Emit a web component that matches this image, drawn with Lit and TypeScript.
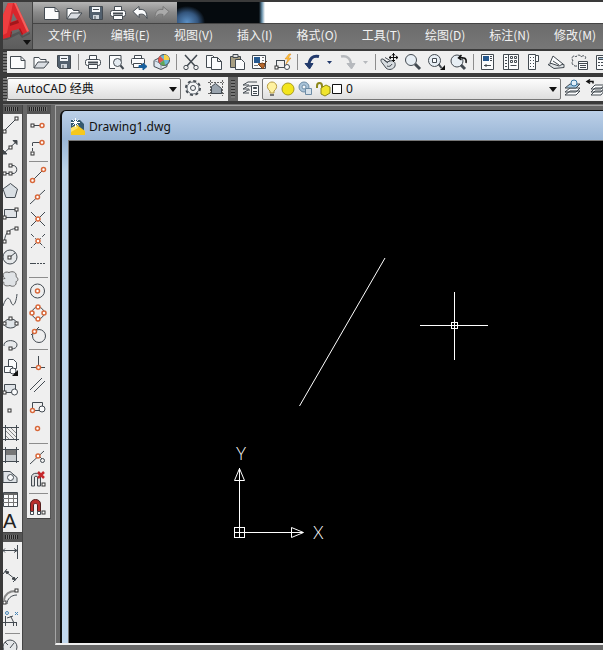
import { LitElement, html, svg, css, SVGTemplateResult } from "lit";
import { customElement, property } from "lit/decorators.js";

const node = (x: number, y: number) =>
  svg`<rect class="node" x=${x - 1.5} y=${y - 1.5} width="3" height="3"></rect>`;
const snap = (x: number, y: number) => svg`<circle class="snap" cx=${x} cy=${y} r="2"></circle>`;

/* Toolbar glyphs, 22 x 22 */
const glyphs: Record<string, SVGTemplateResult> = {
  new: svg`<path class="p" d="M3.5 5.5h10.500l4 4v8h-14.500z"/><path d="M14 5.500v4h4"/>`,
  open: svg`<path class="p" d="M4 17V6.500h5l1.500 2h5.500V11"/><path fill="#d9dde2" d="M4 17l4-6h11l-5 6z"/>`,
  save: svg`<path fill="#52606e" d="M4.500 4.500h13v13h-11l-2-2z"/><path fill="#f4f7fa" stroke="none" d="M7 5h8v5H7z"/><path fill="#cfd6dd" stroke="none" d="M8 13h6v4H8z"/><path d="M10 14v3M8 7.500h6"/>`,
  print: svg`<path class="p" d="M7.500 9V4.500h7V9"/><rect class="p" x="3.500" y="8.500" width="15" height="6" rx="2"/><path class="p" d="M6.500 13.500h9v4h-9z"/><path stroke-width="2" d="M6 11.500h10"/>`,
  preview: svg`<path class="p" d="M16 10V4.500H4.500v13H10"/><circle fill="#e4ebf1" cx="12.500" cy="11.500" r="4"/><path stroke-width="2" d="M15.500 14.500l3 3.500"/>`,
  publish: svg`<path class="p" d="M6.500 8V4.500h7V8"/><rect class="p" x="3.500" y="7.500" width="13" height="6" rx="1"/><path class="p" d="M5.500 12.500h8v4h-8z"/><path fill="#17609e" stroke="#17609e" d="M11 14.500h4V12l4 3.500-4 3.500v-2.500h-4z"/>`,
  web: svg`<path fill="#dce5ee" d="M3 9.500l6-3 7 3v6l-6 3-7-3z"/><path stroke="#8a98a5" d="M3 9.500l7 3v6"/><circle cx="13" cy="9" r="5.500" fill="#6cb9d8"/><path stroke="none" fill="#f6d248" d="M13 9V3.500a5.500 5.500 0 0 1 5.500 5.500z"/><path stroke="none" fill="#e2574c" d="M13 9L8.500 12.200A5.500 5.500 0 0 1 9 5z"/><path stroke="none" fill="#62a654" d="M13 9l1 5.500a5.500 5.500 0 0 1-5-2z"/>`,
  cut: svg`<path stroke-width="1.500" d="M5 4l10 11M17 4L7 15"/><circle cx="6" cy="16.500" r="2.200"/><circle cx="16" cy="16.500" r="2.200"/>`,
  copy: svg`<path class="p" d="M3.500 4.500h6l3 3v9h-9z"/><path class="p" d="M8.500 6.500h6l4 4v8h-10zM14.500 6.500v4h4"/>`,
  paste: svg`<path fill="#a79e82" d="M4.500 5.500h10v11h-10z"/><path fill="#ddd" d="M7 6.500v-3h5v3z"/><path class="p" d="M9.500 8.500h6l3 3v7h-9z"/>`,
  match: svg`<path class="p" d="M3.500 4.500h13v13h-13z"/><path stroke="none" fill="#25588f" d="M5 6h6v6H5z"/><path stroke="#777" d="M13 6.500h2M13 9.500h2M5 14.500h4"/><path fill="#b5662b" stroke="#714019" d="M9 13l5 5 2-4-2-2zM15 13l3-3"/>`,
  edit: svg`<path d="M4 9.500h9M4.500 9.500v7M4 16.500h9M12.500 16V9"/>${node(4.500, 16.500)}<circle cx="15" cy="16" r="2.500" class="p"/><path stroke="#d98315" fill="#ffc43d" stroke-width="0.500" d="M17 3l-4 5h3l-2 5 5-6h-3l3-4z"/>`,
  undo: svg`<path stroke="#223a6c" stroke-width="3" d="M18 5.500c-6-1.500-10 2-10 9"/><path fill="#223a6c" stroke="#223a6c" d="M4 12.500h8l-3.500 5.500z"/>`,
  redo: svg`<path stroke="#b6b9bd" stroke-width="2.500" d="M4 5.500c6-1.500 10 2 10 9"/><path fill="#b6b9bd" stroke="#b6b9bd" d="M10 12.500h8l-3.500 5.500z"/>`,
  pan: svg`<path fill="#d7dce0" d="M3 8c-2 0-1 3 1 5l3 4c3 3 8 1 9-2 1-4-2-6-5-5l-3 1-4-3z"/><path d="M5 9l4 3M6 6.500l5 3M8 15c2 1 4 0 5-2"/><path stroke="#111" d="M14.500 2v9M10 6.500h9M13 4.500l1.500-2 1.500 2M13 9l1.500 1.500L16 9M12 5l-2 1.500L12 8M17 5l2 1.500L17 8"/>`,
  zoom: svg`<circle fill="#e7eef4" cx="9" cy="9" r="5.500"/><path stroke-width="3" d="M13 13l5 5"/>`,
  zoomwin: svg`<circle fill="#e7eef4" cx="9.500" cy="9.500" r="6"/><path class="p" d="M7.500 7.500h4v4h-4z"/><path stroke-width="2" d="M13.500 13l3 4"/><path stroke="none" fill="#111" d="M20 14v5h-5z"/>`,
  zoomprev: svg`<circle fill="#e7eef4" cx="9" cy="10" r="6"/><path stroke-width="3" d="M13 14l4 4"/><path stroke="#111" stroke-width="1.500" d="M18 12c1-5-2-6-7-5M13.500 4L10.500 7l3 2"/>`,
  props: svg`<path class="p" d="M4.500 3.500h12v15h-12z"/><path stroke="none" fill="#25588f" d="M6 5h6v5H6z"/><path d="M13 5.500h2M13 7.500h2M13 9.500h2M7 14.500h7M9 13v3"/>`,
  center: svg`<path class="p" d="M3.500 3.500h15v15h-15zM8.500 3.500v15"/><path d="M5 6.500h2M5 9.500h2M5 12.500h2M5 15.500h2M10.500 5.500h2v2h-2zM14.500 5.500h2v2h-2zM10.500 9.500h2v2h-2zM14.500 9.500h2v2h-2zM10.500 14.500h6"/>`,
  palettes: svg`<path class="p" d="M5.500 3.500h7v15h-7z"/><path class="p" d="M12.500 4.500h3v6h-3z"/><path d="M7 6.500h1M10 6.500h1M7 9.500h1M10 9.500h1M7 12.500h1M10 12.500h1M7 15.500h1M10 15.500h1"/>`,
  sheets: svg`<path fill="#dfe3e6" d="M2 13.500l6-2 10 2v3l-10 1z"/><path class="p" d="M4 12l3-7 10 8-4 2zM7 10l6 4"/>`,
  markup: svg`<path stroke-dasharray="3 1" d="M8 15c-5 1-6-5-4-5-3-5 2-6 3-4 1-3 5-2 5 0 3-3 6 0 4 2"/><path class="p" d="M9.500 10.500h9v8h-9z"/><path d="M10 12.500h9M11 14.500h6M11 16.500h6"/>`,
  calc: svg`<path class="p" d="M4.500 4.500h12v14h-12z"/><path fill="#a9c4d8" d="M6.500 6.500h8v2h-8z"/><path stroke-dasharray="2 1" d="M6 11.500h9M6 14.500h9"/>`,
  back: svg`<path class="p" d="M4 9.500L10 4.500v3c6-1 8 3 8 9-2-4-4-5-8-4v3z"/>`,
  fwd: svg`<path stroke="#777" fill="#aaa" d="M18 9.500L12 4.500v3c-6-1-8 3-8 9 2-4 4-5 8-4v3z"/>`,
  gear: svg`<circle cx="11" cy="11" r="7" stroke-width="2" stroke-dasharray="3 2.500"/><circle fill="#f4f5f6" stroke="#6a7178" cx="11" cy="11" r="6"/><circle cx="11" cy="11" r="2.500"/>`,
  wspace: svg`<path stroke-dasharray="2 1" stroke="#666" d="M5.500 3v16M17.500 3v16M3 5.500h16M3 16.500h16"/><path fill="#9aa4ae" d="M6.500 16.500v-7l4-3 6 5v5z"/>`,
  layers: svg`<path class="p" d="M3 8l5-3h9M3 12l5-3h3M3 16l5-3h2M3 8h6M3 12h6M3 16h6"/><path class="p" d="M11.500 8.500h7v10h-7z"/><path fill="#2a6aa5" d="M13.500 10.500h3v1h-3z"/><path d="M13 14.500h4M13 16.500h4"/>`,
  current: svg`<path class="p" d="M3 18l5-4h10l-4 4zM3 15l5-4h10l-4 4z"/><path fill="#a5c9e2" d="M3 11l5-4h10l-4 4z"/><circle fill="#e2f0fa" stroke="#36739f" cx="12" cy="6" r="3"/>`,
  previous: svg`<path class="p" d="M6 18l4-4h9l-3 4zM6 15l4-4h9l-3 4zM6 12l4-4h9l-3 4z"/><path stroke="#111" stroke-width="1.500" d="M3 4.500h5v2M5 2.500l-3 2 3 2"/>`,
  // object snaps
  track: svg`<path d="M6 11.500h8"/>${node(5.500, 11.500)}${snap(15, 11.500)}`,
  from: svg`<path d="M13 6.500h-7.500" /><path stroke-dasharray="3 2" d="M5.500 7v9"/>${node(5.500, 17.500)}${snap(15, 6.500)}`,
  endp: svg`<path d="M6 16L16 6"/>${snap(5.500, 16.500)}${snap(16.500, 5.500)}`,
  midp: svg`<path d="M3 18L18 4"/>${snap(10.500, 11)}`,
  inter: svg`<path d="M4 4l14 14M18 4L4 18"/>${snap(11, 11)}`,
  appint: svg`<path stroke-dasharray="4 2" d="M4 4l14 14M18 4L4 18"/>${snap(11, 11)}`,
  ext: svg`<path d="M3 11.500h6"/><path stroke-dasharray="2 1" d="M10 11.500h9"/>`,
  cen: svg`<circle cx="10.500" cy="11" r="7"/>${snap(10.500, 11)}`,
  quad: svg`<circle cx="11" cy="11" r="6"/>${snap(11, 5)}${snap(11, 17)}${snap(5, 11)}${snap(17, 11)}`,
  tan: svg`<circle cx="12" cy="12" r="6.500"/><path d="M4 11l8-8"/>${snap(7.500, 7.500)}`,
  perp: svg`<path d="M11.500 4v10M4 15.500h14"/>${snap(11.500, 15.500)}`,
  par: svg`<path d="M3 16L15 4M7 18L18 7"/>`,
  ins: svg`<path d="M5.500 13V6.500h10V10M8 14.500h4"/><circle class="p" cx="15" cy="13" r="3"/>${snap(5.500, 14.500)}`,
  nod: svg`${snap(10.500, 10.500)}`,
  near: svg`<path d="M3 18L17 5M12 10l3 3"/>${snap(11, 10)}<circle cx="15.500" cy="14.500" r="2"/>`,
  none: svg`<path fill="#ddd" d="M4.500 18V9c0-5 9-5 9 0v9h-3V9c0-1-3-1-3 0v9z"/><path stroke="#c5282c" stroke-width="2.500" d="M11 4l6 6M17 4l-6 6"/>${node(16.500, 16.500)}`,
  settings: svg`<path fill="#b92f2c" stroke="#54201f" d="M3.500 16V8c0-6 10-6 10 0v8h-3V9c0-2-4-2-4 0v7z"/><path class="p" d="M3.500 15.500h3v3h-3zM10.500 15.500h3v3h-3z"/>${node(16.500, 16.500)}`,
};

/* Draw toolbar glyphs, 19 x 22 */
const narrow: Record<string, SVGTemplateResult> = {
  line: svg`<path d="M2 16L13 5"/>${node(1.500, 17.500)}${node(13.500, 4.500)}`,
  xline: svg`<path d="M0 18L14 5"/><path fill="#444" d="M10 4.500h4v4zM0 14v4h4z"/>${node(7.500, 11.500)}`,
  pline: svg`<path d="M8 7.500h2c5 0 5 8 0 8H1"/>${node(7.500, 7.500)}${node(1.500, 15.500)}${node(7.500, 15.500)}`,
  polygon: svg`<path fill="#d9dfe4" d="M7.500 3.500l7 5.500-2.500 8.500H3L0 9z"/>`,
  rect: svg`<path fill="#dfe3e7" d="M1.500 7.500h12v8h-12z"/>${node(1.500, 15.500)}${node(13.500, 7.500)}`,
  arc: svg`<path d="M1.500 17C2 9 6 5 13 4.500"/>${node(1.500, 17.500)}${node(5.500, 8.500)}${node(13.500, 4.500)}`,
  circle: svg`<circle fill="#e5e8ea" cx="7" cy="11" r="7"/><path d="M7 11l5-4"/>${node(6.500, 11.500)}`,
  cloud: svg`<path fill="#e0e3e6" stroke="#666" d="M2 10.500c-4-3-1-8 4-6 4-2 8 0 7 4 3 2 2 5 0 5 1 4-3 6-6 4-4 1-7 0-6-3-3-1-2-4 1-4z"/>`,
  spline: svg`<path d="M0 16C3 7 6 6 8 12s5 2 6-8"/>`,
  ellipse: svg`<ellipse fill="#e0e5e9" cx="7.500" cy="11.500" rx="6.500" ry="4.500"/>${node(1.500, 11.500)}${node(13.500, 11.500)}${node(7.500, 6.500)}`,
  earc: svg`<path fill="#e8eaec" d="M1 12C0 5 14 5 14 11c0 3-3 4-6 4"/>${node(7.500, 14.500)}`,
  insert: svg`<path class="p" d="M5.500 3.500h5l3 3v6h-8z"/><path class="p" d="M1.500 10.500h8v6h-8z"/><circle class="p" cx="10" cy="15" r="3"/><path stroke="none" fill="#111" d="M15 14v6H9z"/>`,
  block: svg`<path fill="#dfe3e7" d="M1.500 6.500h11v8h-11z"/><circle class="p" cx="11.500" cy="14" r="3"/>${node(1.500, 14.500)}`,
  point: svg`${node(6.500, 10.500)}`,
  hatch: svg`<path d="M2.500 3v16M13.500 3v16M0 5.500h16M0 17.500h16"/><path stroke="#888" d="M3 9l8 8M3 14l3 3M4 6l9 9M8 6l5 5"/>`,
  gradient: svg`<path fill="#c9cdd0" d="M2.500 5.500h11v12h-11z"/><path stroke="none" fill="#777" d="M3 6h10v5H3z"/><path d="M2.500 3v16M13.500 3v16M0 5.500h16M0 17.500h16"/>`,
  region: svg`<path fill="#dfe3e7" d="M0 5.500h7l7 6v5H0z"/><circle class="p" cx="7.500" cy="11.500" r="3"/>`,
  table: svg`<path class="p" d="M0.500 4.500h14v14h-14z"/><path stroke="#777" d="M5.500 6v12M10.500 6v12M0 10.500h14M0 14.500h14"/><path stroke="#666" stroke-width="2" d="M1 6h13"/>`,
  linear: svg`<path d="M0 8.500h14M14.500 3v14M11 6.500l3 2-3 2M2 6.500l-2 2 2 2"/>`,
  aligned: svg`<path d="M2 7l11 9M0 10l4-5M10 18l5-5"/><path fill="#444" d="M2 7l4 1-2 2zM13 16l-4-1 2-2z"/>`,
  arclen: svg`<path stroke-width="2" stroke="#888" d="M1 14C2 8 6 5 13 5"/><path d="M4 18c0-5 4-9 10-9"/>${node(13.500, 4.500)}${node(1.500, 16.500)}`,
  ordinate: svg`<path d="M2.500 8v10M7.500 8l3 6v4M13.500 14v4M0 14.500h14M4 10l6-2"/><circle cx="4" cy="5" r="1.500" stroke="#4584b5"/><path stroke="#4584b5" d="M12 4l3 3M15 4l-3 3"/>`,
  radius: svg`<circle fill="#e5e8ea" cx="7" cy="11" r="7"/><path d="M7 12l4-5M5 9l-3-3"/>`,
};

const base = css`
  * { box-sizing: border-box; }
  svg { display: block; flex: none; fill: none; stroke: #434a51; stroke-width: 1; }
  .p { fill: #fbfcfd; }
  .node { fill: #fff; stroke: #333; }
  .snap { fill: #fff; stroke: #d8683a; stroke-width: 1.5; }
  button { border: 0; padding: 0; margin: 0; background: none; font: inherit; color: inherit; flex: none; }
`;

@customElement("tool-strip")
class ToolStrip extends LitElement {
  @property({ attribute: false }) items: string[] = [];
  @property() kind = "wide";

  static styles = [
    base,
    css`
      :host { display: flex; flex: none; }
      :host([column]) { flex-direction: column; }
      button { display: flex; align-items: center; justify-content: center; height: 22px; overflow: hidden; }
      .wide { width: 23px; }
      .quick { width: 22px; height: 21px; }
      :host([column]) button { justify-content: flex-start; }
      .narrow { width: 19px; }
      .drop { width: 13px; }
      .letter { width: 19px; font: 20px/22px "Liberation Sans", sans-serif; color: #222; }
      .sep { flex: none; width: 6px; display: flex; justify-content: center; padding: 3px 0; }
      .sep::before { content: ""; width: 1px; background: #8d8d8d; }
      :host([column]) .sep { width: auto; height: 6px; padding: 0 2px; align-items: center; }
      :host([column]) .sep::before { width: 100%; height: 1px; }
    `,
  ];

  render() {
    return this.items.map((name) => {
      if (name === "|") return html`<span class="sep"></span>`;
      if (name === "text") return html`<button class="letter" aria-label="text">A</button>`;
      if (name.startsWith("drop"))
        return html`<button class="drop" aria-label="history">
          <svg width="5" height="3" viewBox="0 0 5 3"><path stroke="none" fill=${name === "drop" ? "#223a6c" : "#b6b9bd"} d="M0 0h5L2.500 3z"/></svg>
        </button>`;
      return this.kind === "narrow"
        ? html`<button class="narrow" aria-label=${name}><svg width="19" height="22" viewBox="0 0 19 22">${narrow[name]}</svg></button>`
        : html`<button class=${this.kind} aria-label=${name}><svg width="22" height="22" viewBox="0 0 22 22">${glyphs[name]}</svg></button>`;
    });
  }
}

@customElement("app-root")
class AppRoot extends LitElement {
  static styles = [
    base,
    css`
      :host {
        display: flex; flex-direction: column; height: 100vh; overflow: hidden;
        padding: 2px 0 0 3px; background: #3a3a3a; border: 0; box-sizing: border-box;
        font: 12px/16px "Noto Sans", "Noto Sans CJK SC", sans-serif; color: #111;
      }
      header { display: flex; height: 47px; flex: none; background: #6c6c6c; }
      .logo { width: 30px; background: linear-gradient(#7c7c7c, #5c5c5c); border-right: 1px solid #444; }
      .logo svg { stroke: none; }
      .head { flex: 1; min-width: 0; display: flex; flex-direction: column; }
      .title { display: flex; height: 22px; background: #fff; border-bottom: 1px solid #444; }
      .quick { width: 144px; padding-left: 8px; background: linear-gradient(#b5b5b5, #8a8a8a 50%, #6f6f6f); }
      .wallpaper { width: 88px; background:
        radial-gradient(ellipse 18px 16px at 10px 20px, #5b8fc4, #33557d 60%, transparent),
        linear-gradient(90deg, #050a0e 82px, #6a93ad 85px, #fff); }
      nav { flex: 1; display: flex; align-items: center; gap: 24px; padding: 0 0 3px 15px; overflow: hidden;
        background: linear-gradient(#6c6c6c, #777); color: #f2f2f2; font-family: "Noto Sans CJK SC", sans-serif; }
      nav button { white-space: nowrap; }
      .bar { display: flex; flex: none; height: 22px; margin-top: 2px; background: #efefef; overflow: hidden; }
      .grip { flex: none; width: 4px; background: repeating-linear-gradient(#333 0 1px, #777 1px 3px); }
      .grip.mid { width: 10px; border: solid #666; border-width: 3px; margin: 0 1px; }
      .bar .tools { margin-left: -1px; }
      .second { height: 24px; margin-top: 4px; align-items: stretch; }
      select { appearance: none; width: 100%; height: 22px; border: 1px solid #777; border-radius: 2px; margin: 0;
        font: inherit; color: #111; padding: 0 8px; background: linear-gradient(#fdfdfd, #dedede); }
      .combo { position: relative; display: flex; align-items: center; flex: none; }
      .combo > .arrow { position: absolute; right: 4px; top: 10px; stroke: none; }
      .space { width: 174px; }
      .layer { width: 299px; }
      .layer select { padding-left: 83px; }
      .state { position: absolute; left: 0; top: 0; pointer-events: none; }
      .body { flex: 1; min-height: 0; display: flex; margin-top: 3px; background: #686868; border-top: 1px solid #777; }
      .side { flex: none; display: flex; flex-direction: column; overflow: hidden; background: #686868; }
      .one { width: 20px; border-right: 1px solid #444; }
      .two { width: 24px; margin-left: 4px; }
      .side tool-strip { background: #efefef; border-bottom: 1px solid #444; }
      .two tool-strip { border-right: 1px solid #555; }
      .hgrip { flex: none; height: 9px; border: solid #555; border-width: 2px 4px 3px 2px;
        background: repeating-linear-gradient(90deg, #222 0 1px, #777 1px 2px); }
      .mdi { flex: 1; min-width: 0; margin: 0 0 5px 4px; border: solid #a5a5a5; border-width: 1px 0 2px 1px; border-bottom-color: #eee;
        padding: 4px 0 0 4px; display: flex; }
      .doc { flex: 1; min-width: 0; display: flex; flex-direction: column; border: solid #111; border-width: 1px 0 0 2px;
        border-radius: 6px 0 0 0; background: linear-gradient(#bcd0e8, #9ab6d6 28px, #bcd3e8 60px, #c2d8ee); padding-left: 6px; }
      .caption { display: flex; align-items: center; gap: 3px; height: 29px; flex: none; margin: 0; padding: 3px 0 0 2px;
        font-size: 12px; line-height: 18px; font-weight: 400; color: #111; }
      .caption svg { stroke: none; }
      .canvas { flex: 1; min-height: 0; overflow: hidden; background: #000; border: solid #777; border-width: 1px 0 0 1px; }
      .canvas svg { stroke: #fff; }
      .axis { fill: #fff; stroke: none; font: 300 17px "Lato", sans-serif; }
    `,
  ];

  render() {
    const menus = ["文件(F)", "编辑(E)", "视图(V)", "插入(I)", "格式(O)", "工具(T)", "绘图(D)", "标注(N)", "修改(M)"];
    const arrow = html`<svg class="arrow" width="8" height="5" viewBox="0 0 8 5"><path fill="#111" d="M0 0h8L4 5z"/></svg>`;
    return html`
      <header>
        <button class="logo" aria-label="AutoCAD">
          <svg width="29" height="47" viewBox="0 0 29 47">
            <path fill="#3f3f3f" opacity=".5" d="M8 33l9-4 3 5 7-4v2l-8 4-3-4-12 6H0v-2z"/>
            <path fill="#d9262c" fill-rule="evenodd" d="M5 1h8l13 28-7 4-3-6-8 2-1 6-7 2V13zM10 11l-2 9 6-2z"/>
            <path fill="#ee3e40" d="M5 1h5L4 31l-4 2V13z"/>
            <path fill="#f2605c" d="M11 1h2l13 28-2 1z"/>
            <path fill="#a3161b" d="M7 21l8-3 1 3-9 3zM7 35l1-6 1 1-1 5zM16 27l1-1 3 6-1 1z"/>
            <path fill="#111" d="M20 38h8l-4 5z"/>
          </svg>
        </button>
        <div class="head">
          <div class="title">
            <tool-strip class="quick" kind="quick" .items=${["new", "open", "save", "print", "back", "fwd"]}></tool-strip>
            <div class="wallpaper"></div>
          </div>
          <nav>${menus.map((m) => html`<button>${m}</button>`)}</nav>
        </div>
      </header>

      <div class="bar">
        <span class="grip"></span>
        <tool-strip class="tools" .items=${["new", "open", "save", "|", "print", "preview", "publish", "web", "|", "cut", "copy", "paste", "match", "edit", "|",
          "undo", "drop", "redo", "drop-off", "|", "pan", "zoom", "zoomwin", "zoomprev", "|", "props", "center", "palettes", "sheets", "markup", "calc"]}></tool-strip>
      </div>

      <div class="bar second">
        <span class="grip"></span>
        <div class="combo space">
          <select aria-label="工作空间"><option>AutoCAD 经典</option></select>${arrow}
        </div>
        <tool-strip .items=${["gear", "wspace"]}></tool-strip>
        <span class="grip mid"></span>
        <tool-strip .items=${["layers"]}></tool-strip>
        <div class="combo layer">
          <select aria-label="图层"><option>0</option></select>
          <svg class="state" width="84" height="24" viewBox="0 -1 84 24">
            <path fill="#fff2a0" stroke="#b59b43" d="M8 13c-5-4-2-9 2-9s7 5 2 9v2H8z"/><path stroke="#777" stroke-width="2" d="M8 17h4"/>
            <circle fill="#f3e51c" stroke="#a79a20" cx="26" cy="11" r="6"/>
            <circle fill="#a9c3d8" stroke="#6d8ca5" cx="42" cy="9" r="5"/><circle fill="#f5f8fb" stroke="#6d8ca5" cx="42" cy="9" r="2"/><path fill="#d6e1ea" stroke="#6d8ca5" d="M43.500 10.500h6v6h-6z"/>
            <path stroke="#8d881a" stroke-width="2" d="M55 10V8c0-4 5-4 5 0v3"/><path fill="#f0e52d" stroke="#8d881a" d="M59 10l5-3 4 2v6l-5 3-4-2z"/>
            <path fill="#fff" stroke="#111" d="M70.500 6.500h9v9h-9z"/>
          </svg>
          ${arrow}
        </div>
        <tool-strip .items=${["current", "previous"]}></tool-strip>
      </div>

      <div class="body">
        <div class="side one">
          <span class="hgrip"></span>
          <tool-strip column kind="narrow" .items=${["line", "xline", "pline", "polygon", "rect", "arc", "circle", "cloud", "spline", "ellipse",
            "earc", "insert", "block", "point", "hatch", "gradient", "region", "table", "text"]}></tool-strip>
          <span class="hgrip"></span>
          <tool-strip column kind="narrow" .items=${["linear", "aligned", "arclen", "ordinate", "|", "radius"]}></tool-strip>
        </div>
        <div class="side two">
          <span class="hgrip"></span>
          <tool-strip column .items=${["track", "from", "|", "endp", "midp", "inter", "appint", "ext", "|", "cen", "quad", "tan", "|",
            "perp", "par", "ins", "nod", "|", "near", "none", "|", "settings"]}></tool-strip>
        </div>
        <main class="mdi">
          <section class="doc">
            <h1 class="caption">
              <svg width="16" height="18" viewBox="0 0 16 18">
                <path fill="#34596f" d="M1 2h9l4 4v10H1z"/><path fill="#f5c81c" d="M1 10l6-3 8 6v4H1z"/><path fill="#fbe36a" d="M1 10l6-3 1 3-7 4z"/>
                <path stroke="#fff" d="M5.500 0v9M1 4.500h9M2.500 1.500l6 6M8.500 1.500l-6 6"/>
              </svg>
              <span>Drawing1.dwg</span>
            </h1>
            <div class="canvas">
              <svg width="534" height="503" viewBox="69 141 534 503">
                <path d="M385 258L299.500 406"/>
                <path shape-rendering="crispEdges" d="M420 325.500h68M454.500 292v68M451.500 322.500h6v6h-6z"/>
                <path shape-rendering="crispEdges" d="M234.500 527.500h10v10h-10zM234 532.500h57M239.500 538v-58"/>
                <path d="M234.500 480.500h10l-5-12zM239.500 468v12M291.500 527.500v10l12-5zM291 532.500h12"/>
                <text class="axis" x="236" y="460">Y</text>
                <text class="axis" x="313" y="539">X</text>
              </svg>
            </div>
          </section>
        </main>
      </div>
    `;
  }
}
